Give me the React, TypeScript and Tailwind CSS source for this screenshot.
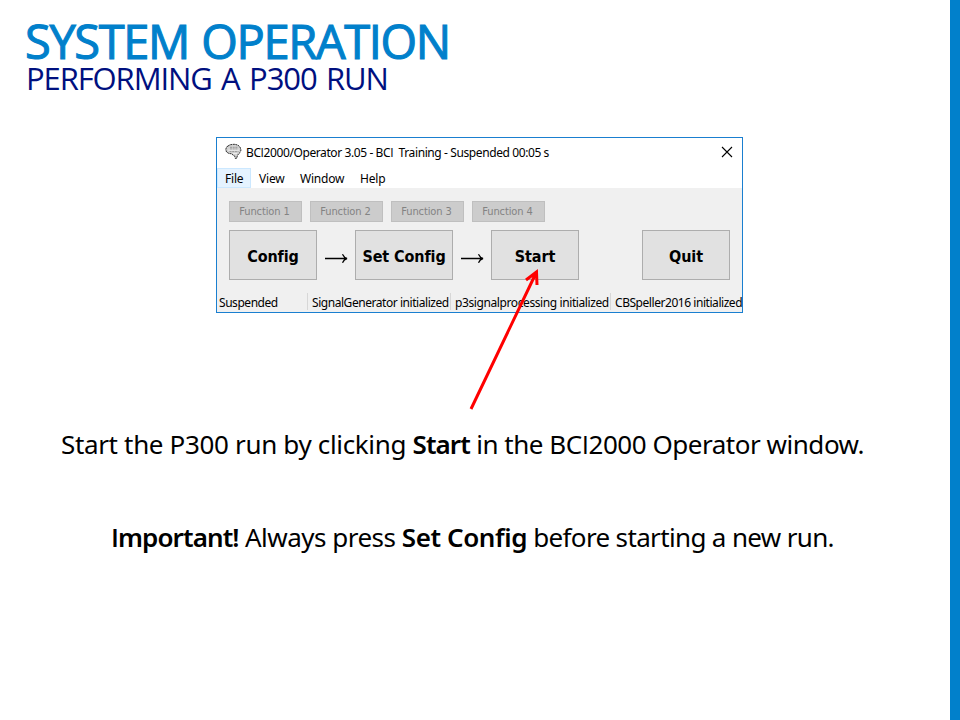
import type { ReactNode } from "react";

const noto = "font-['Noto_Sans','Open_Sans',sans-serif]";
const open = "font-['Open_Sans','Noto_Sans',sans-serif]";
const dejavu = "font-['DejaVu_Sans_Condensed','DejaVu_Sans',sans-serif]";

/** Plain, serif-less capital I. */
const Caps = ({ children }: { children: ReactNode }) => <span className={open}>{children}</span>;

const BrainIcon = () => (
  <svg className="mt-[5px] h-[17px] w-[17px] shrink-0" viewBox="0 0 17 17">
    <path
      d="M3 3 5 1.8 7.5 1.4 10 1.3 13 2.2 15 4 16 7 15 9.5 13.5 11 12.5 12.5 11.5 15.5 10.3 15.5 10 13.5 8 12 6.5 10.8 4 10.5 1.5 9 .8 6.5 1.4 4.2Z"
      fill="#d2d2d2" stroke="#333" strokeWidth="1" strokeDasharray="2 .6"
    />
    <path d="M5 4.3H13M5 6H13M4.5 8.6H13.5" stroke="#888" strokeWidth=".8" strokeDasharray="2 .7" />
    <path d="M3 7.2H14M8 10.5H12" stroke="#f2f2f2" strokeWidth=".8" />
  </svg>
);

const RightArrow = () => (
  <svg className="mt-[22px] h-[12px] w-[23px] shrink-0" viewBox="0 0 23 12" fill="none" stroke="#000" strokeWidth="1.3">
    <path d="M0 6.5H22M17.5 2.3C18.5 4.5 20 6 22 6.5C20 7 18.5 8.5 17.5 10.7" />
  </svg>
);

const functions = ["Function 1", "Function 2", "Function 3", "Function 4"];

function BigButton({ label, className }: { label: string; className: string }) {
  return (
    <button className={`${className} ${dejavu} h-[50px] shrink-0 whitespace-nowrap border border-[#adadad] bg-[#e1e1e1] pt-[4px] text-center text-[16px] font-bold tracking-[-0.1px] text-black`}>
      {label}
    </button>
  );
}

function OperatorWindow() {
  return (
    <section className={`${noto} relative ml-[216px] flex h-[176px] w-[527px] flex-col border border-[#1a7fd0] bg-[#f0f0f0] text-[12px] leading-[16px] text-black`}>
      <header className="flex h-[30px] bg-white pl-[8px]">
        <BrainIcon />
        <span className="ml-[4px] mt-[7px] whitespace-pre tracking-[-0.4px]">
          BC<Caps>I</Caps>2000/Operator 3.05 - BC<Caps>I</Caps>{"  "}Training - Suspended 00:05 s
        </span>
        <svg className="ml-auto mr-[9px] mt-[8px] h-[12px] w-[12px]" viewBox="0 0 12 12" stroke="#000" strokeWidth="1.1">
          <path d="M1 1 11 11M11 1 1 11" />
        </svg>
      </header>
      <nav className="flex h-[20px] bg-white tracking-[-0.2px]">
        <span className="w-[34px] border border-[#cce8ff] bg-[#e5f3ff] pl-[7px] pt-[2px]">File</span>
        <span className="ml-[8px] w-[41px] pt-[3px]">View</span>
        <span className="w-[60px] pt-[3px]">Window</span>
        <span className="pt-[3px]">Help</span>
      </nav>
      <div className="ml-[12px] mt-[13px] flex gap-[8px]">
        {functions.map((name) => (
          <button key={name} disabled className={`${dejavu} h-[21px] w-[73px] whitespace-nowrap border border-[#bfbfbf] bg-[#cccccc] pr-[2px] text-[11px] leading-[20px] tracking-[-0.1px] text-[#838383]`}>
            {name}
          </button>
        ))}
      </div>
      <div className="ml-[12px] mt-[8px] flex">
        <BigButton label="Config" className="w-[88px]" />
        <div className="flex w-[38px] pl-[8px]"><RightArrow /></div>
        <BigButton label="Set Config" className="w-[98px]" />
        <div className="flex w-[38px] pl-[8px]"><RightArrow /></div>
        <BigButton label="Start" className="w-[88px]" />
        <BigButton label="Quit" className="ml-[63px] w-[88px]" />
      </div>
      <footer className="mt-[13px] flex h-[17px] whitespace-nowrap pl-[2px] leading-[20px] tracking-[-0.45px]">
        <span className="w-[89px] shrink-0 border-r border-[#d7d7d7]">Suspended</span>
        <span className="w-[143px] shrink-0 border-r border-[#d7d7d7] pl-[4px]">SignalGenerator initialized</span>
        <span className="w-[160px] shrink-0 border-r border-[#d7d7d7] pl-[4px] tracking-[-0.4px]">p3signalprocessing initialized</span>
        <span className="pl-[4px]">CBSpeller2016 initialized</span>
      </footer>
      <svg className="absolute left-[250px] top-[130px] h-[145px] w-[76px]" viewBox="0 0 76 145" fill="none" stroke="#ff0000" strokeWidth="3">
        <path d="M4 141 69.5 4M59 12 69.5 4 70 17" strokeLinejoin="miter" />
      </svg>
    </section>
  );
}

export default function App() {
  return (
    <main className="flex h-[720px] w-[960px] overflow-hidden bg-white">
      <div className="flex w-[950px] flex-col">
        <div className={`${open} h-[137px] whitespace-nowrap pl-[25px]`}>
          <h1 className="h-[62px] pt-[9px] text-[47px] leading-[64px] tracking-[-1.35px] text-[#0180cb] [word-spacing:1.5px] [-webkit-text-stroke:1.1px_#0180cb]">SYSTEM OPERATION</h1>
          <h2 className="pl-[1px] text-[31px] leading-[32px] tracking-[-1.1px] text-[#00107f] [word-spacing:2.5px]">PERFORMING A P300 RUN</h2>
        </div>
        <OperatorWindow />
        <p className={`${noto} ml-[61px] mt-[111px] whitespace-nowrap text-[26px] leading-[40px] tracking-[-0.47px] text-black`}>
          <span className="tracking-[-0.34px]">Start the P300 run by clicking </span><b className="font-semibold tracking-[-0.9px]">Start</b> in the BC<Caps>I</Caps>2000 Operator window.
        </p>
        <p className={`${noto} ml-[111px] mt-[53px] whitespace-nowrap text-[26px] leading-[40px] tracking-[-0.5px] text-black`}>
          <b className="font-semibold tracking-[-0.9px]"><Caps>I</Caps>mportant!</b> Always press <b className="font-semibold tracking-[-0.4px]">Set Config</b><span className="tracking-[-0.65px]"> before starting a new run.</span>
        </p>
      </div>
      <div className="w-[10px] bg-[#0180cb]" />
    </main>
  );
}
